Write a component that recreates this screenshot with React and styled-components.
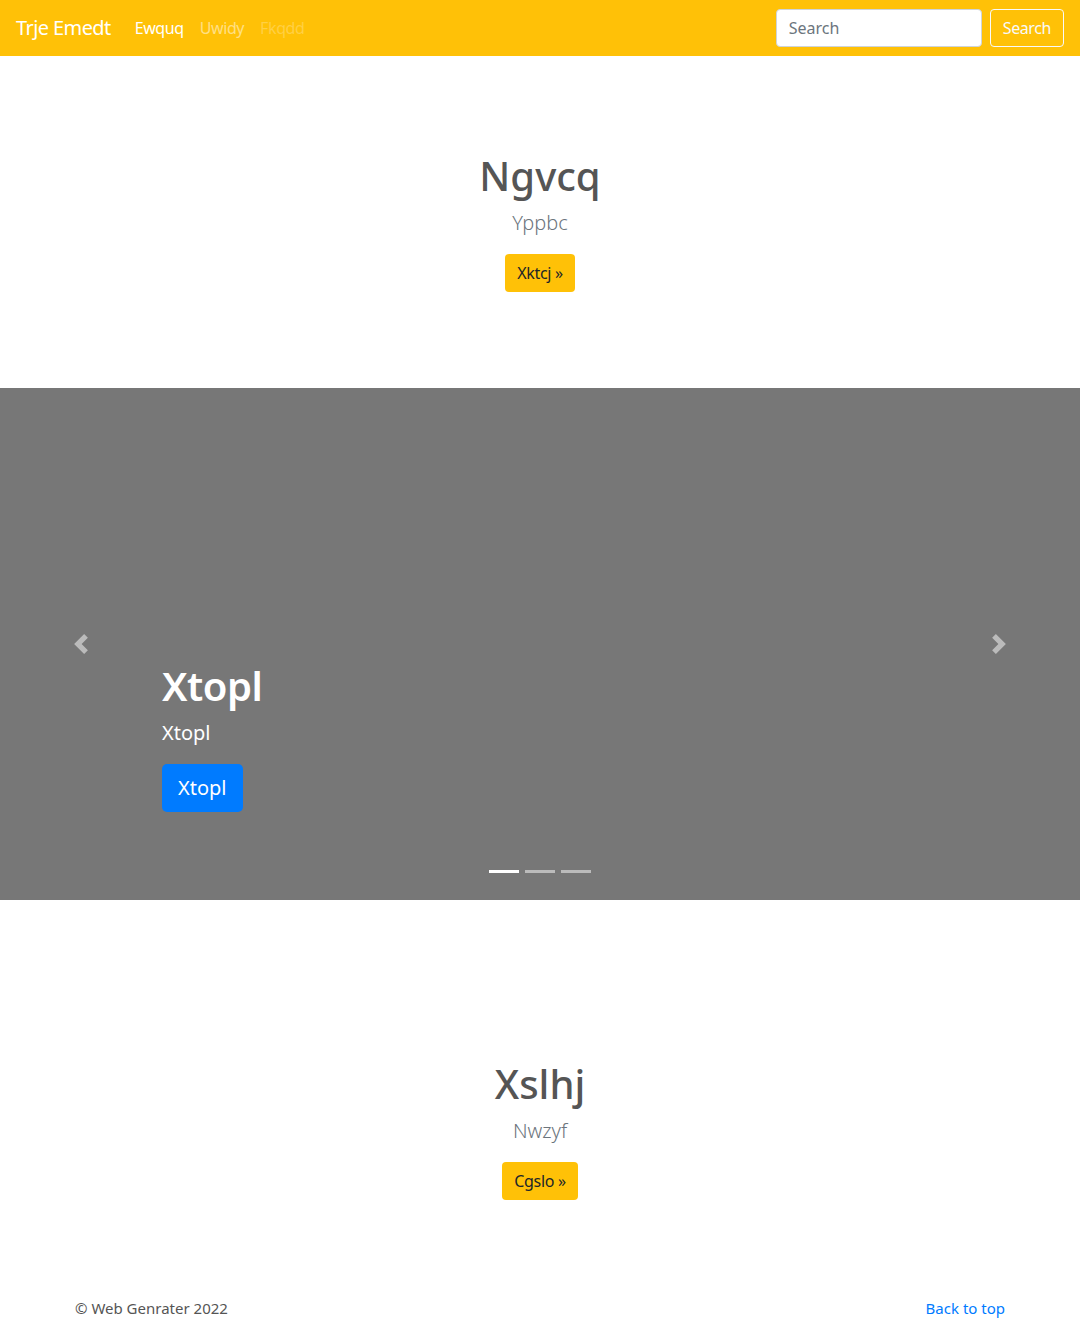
import React from 'react';
import styled, { createGlobalStyle } from 'styled-components';

const GlobalStyle = createGlobalStyle`
  * { box-sizing: border-box; }
  body {
    margin: 0;
    font-family: "Noto Sans", "Open Sans", sans-serif;
    font-size: 16px;
    line-height: 1.5;
    color: #212529;
    background: #fff;
  }
`;

const slides = [{ title: 'Xtopl', text: 'Xtopl', action: 'Xtopl' }, {}, {}];

export default function App() {
  const [active] = React.useState(0);

  return (
    <>
      <GlobalStyle />
      <NavBar>
        <Brand href="#">Trje Emedt</Brand>
        <NavLinks>
          <NavLink $level={1}>Ewquq</NavLink>
          <NavLink $level={0.5}>Uwidy</NavLink>
          <NavLink $level={0.25}>Fkqdd</NavLink>
        </NavLinks>
        <SearchForm onSubmit={(e) => e.preventDefault()}>
          <SearchInput placeholder="Search" />
          <OutlineButton type="submit">Search</OutlineButton>
        </SearchForm>
      </NavBar>

      <Jumbo $top={96}>
        <Heading>Ngvcq</Heading>
        <Lead>Yppbc</Lead>
        <WarnButton>Xktcj »</WarnButton>
      </Jumbo>

      <Carousel>
        <Control $side="left">
          <svg width="20" height="20" viewBox="0 0 8 8" fill="#fff">
            <path d="M5.25 0l-4 4 4 4 1.5-1.5L4.25 4l2.5-2.5L5.25 0z" />
          </svg>
        </Control>
        <Caption>
          <CaptionTitle>{slides[0].title}</CaptionTitle>
          <CaptionText>{slides[0].text}</CaptionText>
          <PrimaryButton>{slides[0].action}</PrimaryButton>
        </Caption>
        <Control $side="right">
          <svg width="20" height="20" viewBox="0 0 8 8" fill="#fff">
            <path d="M2.75 0l-1.5 1.5L3.75 4l-2.5 2.5L2.75 8l4-4-4-4z" />
          </svg>
        </Control>
        <Indicators>
          {slides.map((_, i) => (
            <Indicator key={i} $active={i === active} />
          ))}
        </Indicators>
      </Carousel>

      <Jumbo $top={160}>
        <Heading>Xslhj</Heading>
        <Lead>Nwzyf</Lead>
        <WarnButton>Cgslo »</WarnButton>
      </Jumbo>

      <Footer>
        <FooterText>© Web Genrater 2022</FooterText>
        <FooterLink href="#">Back to top</FooterLink>
      </Footer>
    </>
  );
}

const NavBar = styled.nav`
  display: flex;
  align-items: center;
  height: 56px;
  padding: 0 16px;
  background: #ffc107;
`;

const Brand = styled.a`
  font-size: 20px;
  line-height: 30px;
  letter-spacing: -0.6px;
  color: #fff;
  text-decoration: none;
  margin-right: 16px;
  white-space: nowrap;
`;

const NavLinks = styled.div`
  display: flex;
  flex: 1;
`;

const NavLink = styled.a`
  padding: 8px;
  font-size: 16px;
  letter-spacing: -0.4px;
  color: rgba(255, 255, 255, ${(p) => p.$level});
  cursor: pointer;
`;

const SearchForm = styled.form`
  display: flex;
  align-items: center;
  gap: 8px;
`;

const SearchInput = styled.input`
  width: 206px;
  height: 38px;
  padding: 6px 12px;
  font-family: inherit;
  font-size: 16px;
  color: #495057;
  background: #fff;
  border: 1px solid #ced4da;
  border-radius: 4px;
  outline: none;
  &::placeholder { color: #6c757d; }
`;

const OutlineButton = styled.button`
  height: 38px;
  padding: 6px 12px;
  font-family: inherit;
  font-size: 16px;
  letter-spacing: -0.4px;
  color: #f8f9fa;
  background: transparent;
  border: 1px solid #f8f9fa;
  border-radius: 4px;
`;

const Jumbo = styled.section`
  display: flex;
  flex-direction: column;
  align-items: center;
  padding: ${(p) => p.$top}px 32px 96px;
  text-align: center;
`;

const Heading = styled.h1`
  margin: 0 0 8px;
  font-size: 40px;
  line-height: 48px;
  font-weight: 500;
  color: #555;
`;

const Lead = styled.p`
  margin: 0 0 16px;
  font-size: 20px;
  line-height: 30px;
  font-weight: 300;
  color: #6c757d;
`;

const WarnButton = styled.a`
  display: inline-flex;
  align-items: center;
  height: 38px;
  padding: 0 12px;
  font-size: 16px;
  letter-spacing: -0.3px;
  color: #212529;
  background: #ffc107;
  border-radius: 4px;
  cursor: pointer;
`;

const Carousel = styled.div`
  position: relative;
  display: flex;
  flex-direction: column;
  justify-content: flex-end;
  height: 512px;
  background: #777;
`;

const Caption = styled.div`
  display: flex;
  flex-direction: column;
  align-items: flex-start;
  padding: 0 162px 88px;
  color: #fff;
`;

const CaptionTitle = styled.h1`
  margin: 0 0 8px;
  font-size: 40px;
  line-height: 48px;
  font-weight: 600;
  letter-spacing: -0.5px;
`;

const CaptionText = styled.p`
  margin: 0 0 16px;
  font-size: 20px;
  line-height: 30px;
`;

const PrimaryButton = styled.a`
  display: inline-flex;
  align-items: center;
  height: 48px;
  padding: 0 16px;
  font-size: 20px;
  color: #fff;
  background: #007bff;
  border-radius: 5px;
  cursor: pointer;
`;

const Control = styled.a`
  position: absolute;
  top: 0;
  bottom: 0;
  ${(p) => p.$side}: 0;
  width: 15%;
  display: flex;
  align-items: center;
  justify-content: center;
  opacity: 0.5;
  cursor: pointer;
`;

const Indicators = styled.div`
  position: absolute;
  left: 0;
  right: 0;
  bottom: 20px;
  display: flex;
  justify-content: center;
  gap: 6px;
`;

const Indicator = styled.span`
  width: 30px;
  height: 3px;
  margin: 7px 0;
  background: #fff;
  opacity: ${(p) => (p.$active ? 1 : 0.5)};
`;

const Footer = styled.footer`
  display: flex;
  justify-content: space-between;
  align-items: center;
  max-width: 960px;
  margin: 0 auto;
  padding: 0 15px;
  font-size: 15px;
  line-height: 24px;
`;

const FooterText = styled.span`
  color: #555;
`;

const FooterLink = styled.a`
  color: #007bff;
  text-decoration: none;
`;
